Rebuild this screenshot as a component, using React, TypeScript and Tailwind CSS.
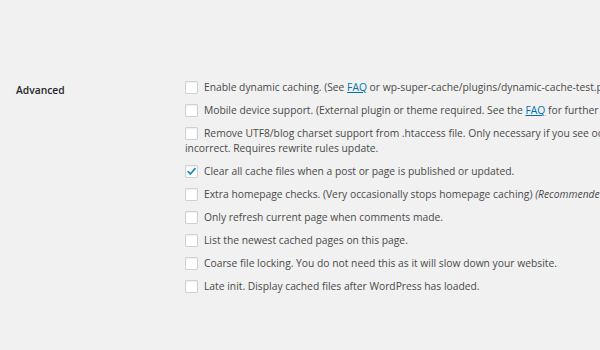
import type { ReactNode } from "react";

type Opt = { checked?: boolean; body: ReactNode };

const Faq = () => <a className="text-[#0073aa] underline">FAQ</a>;

const options: Opt[] = [
  {
    body: (
      <>
        Enable dynamic caching. (See <Faq /> or wp-super-cache/plugins/dynamic-cache-test.php for example code.)
      </>
    ),
  },
  {
    body: (
      <>
        Mobile device support. (External plugin or theme required. See the <Faq /> for further details.)
      </>
    ),
  },
  {
    body: (
      <>
        Remove UTF8/blog charset support from .htaccess file. Only necessary if you see odd characters or punctuation looks
        <br />
        incorrect. Requires rewrite rules update.
      </>
    ),
  },
  { checked: true, body: <>Clear all cache files when a post or page is published or updated.</> },
  {
    body: (
      <>
        Extra homepage checks. (Very occasionally stops homepage caching) <em>(Recommended)</em>
      </>
    ),
  },
  { body: <>Only refresh current page when comments made.</> },
  { body: <>List the newest cached pages on this page.</> },
  { body: <>Coarse file locking. You do not need this as it will slow down your website.</> },
  { body: <>Late init. Display cached files after WordPress has loaded.</> },
];

function Box({ checked }: { checked?: boolean }) {
  return (
    <span className="relative inline-block w-[13px] h-[13px] mr-[6px] align-[-3px] bg-white border border-[#cfd2d5] rounded-[1px] shadow-[inset_0_1px_2px_rgba(0,0,0,0.07)]">
      {checked && (
        <svg viewBox="0 0 13 13" className="absolute -left-px -top-px w-[13px] h-[13px]">
          <path d="M3.2 6.6 L5.4 9 L10 3.6" fill="none" stroke="#1e8cbe" strokeWidth="1.8" strokeLinecap="round" strokeLinejoin="round" />
        </svg>
      )}
    </span>
  );
}

export default function App() {
  return (
    <div
      className="w-[600px] h-[350px] overflow-hidden bg-[#f1f1f1] text-[#4a4a4a] text-[10.3px] leading-[15px]"
      style={{ fontFamily: '"Open Sans", "Noto Sans", sans-serif' }}
    >
      <div className="flex pt-[80px]">
        <div className="w-[185px] shrink-0 pl-[16px] pt-[3px] font-semibold text-[#23282d]">Advanced</div>
        <div className="flex flex-col gap-[8px] whitespace-nowrap">
          {options.map((o, i) => (
            <label key={i} className="block">
              <Box checked={o.checked} />
              {o.body}
            </label>
          ))}
        </div>
      </div>
    </div>
  );
}
